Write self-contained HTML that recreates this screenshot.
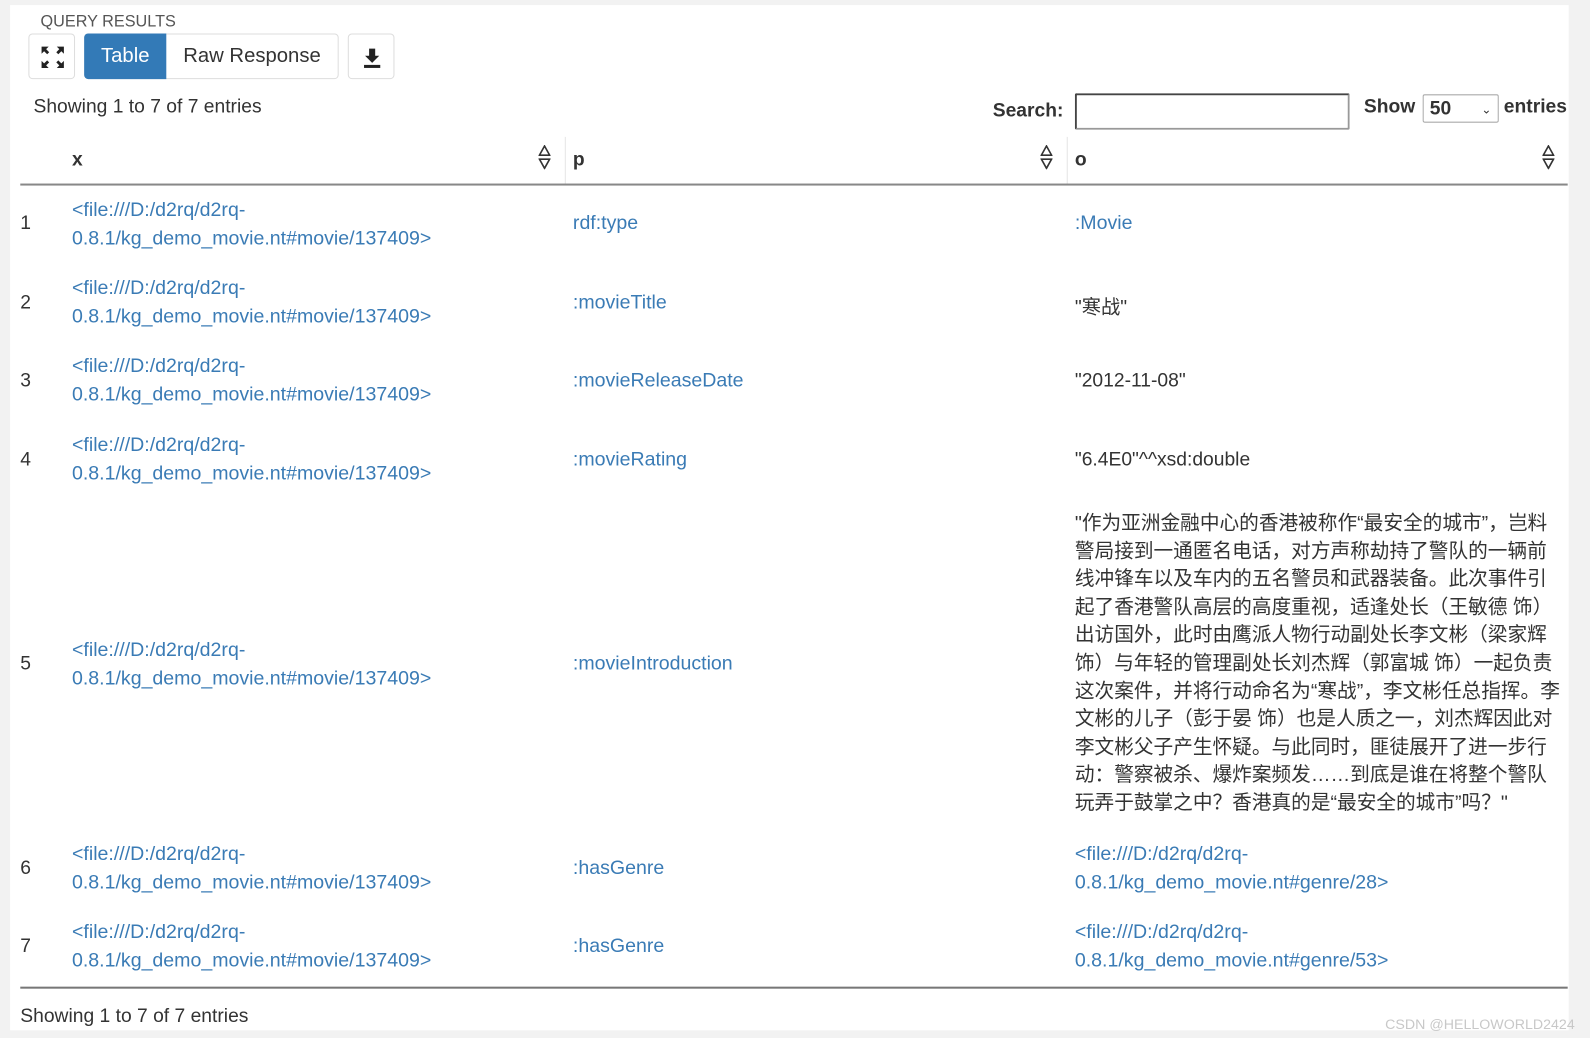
<!DOCTYPE html>
<html><head><meta charset="utf-8">
<style>
*{margin:0;padding:0;box-sizing:border-box}
html,body{width:1590px;height:1038px;overflow:hidden}
body{background:#f2f2f2;font-family:"Liberation Sans","Noto Sans CJK SC",sans-serif;color:#333;font-size:19px}
#w{position:absolute;left:0;top:0;width:1568px;height:1024px;transform:scale(1.01403);transform-origin:0 0}
#panel{position:absolute;left:10px;top:5px;width:1537px;height:1011px;background:#fff}
.a{position:absolute;white-space:nowrap}
.lk{color:#3a7bb5;font-size:19.3px}
.t2{line-height:27.5px}
.btn{position:absolute;border:1px solid #ddd;border-radius:4px;background:#fff}
.sort{position:absolute;width:12px;height:24px}
.vl{position:absolute;top:135px;height:47px;width:1px;background:#e5e5e5}
</style></head><body><div id="w">
<div id="panel"></div>
<div class="a" style="left:40px;top:13px;font-size:16px;color:#555">QUERY RESULTS</div>
<div class="btn" style="left:28px;top:33px;width:46px;height:45px">
<svg width="46" height="45" viewBox="0 0 46 45"><g fill="#222">
<path d="M12 12h7l-2.5 2.5 3 3-2 2-3-3L12 19z"/><path d="M34 12h-7l2.5 2.5-3 3 2 2 3-3L34 19z"/>
<path d="M12 33h7l-2.5-2.5 3-3-2-2-3 3L12 26z"/><path d="M34 33h-7l2.5-2.5-3-3 2-2 3 3L34 26z"/></g></svg></div>
<div class="btn" style="left:83px;top:33px;width:251px;height:45px"></div>
<div class="a" style="left:83px;top:33px;width:81px;height:45px;background:#337ab7;border-radius:4px 0 0 4px;color:#fff;line-height:45px;text-align:center;font-size:20px">Table</div>
<div class="a" style="left:164px;top:33px;width:169px;height:45px;line-height:45px;text-align:center;font-size:20px;color:#333">Raw Response</div>
<div class="btn" style="left:343px;top:33px;width:46px;height:45px">
<svg width="46" height="45" viewBox="0 0 46 45"><g fill="#222"><path d="M20 14h6v7h4l-7 7-7-7h4z"/><rect x="15" y="30" width="16" height="3"/></g></svg></div>
<div class="a" style="left:33px;top:95px">Showing 1 to 7 of 7 entries</div>
<div class="a" style="left:979px;top:99px;font-weight:bold;color:#333">Search:</div>
<div class="a" style="left:1060px;top:92px;width:271px;height:36px;border:2px solid #333;border-radius:2px;border-color:#444 #999 #999 #444"></div>
<div class="a" style="left:1345px;top:95px;font-weight:bold">Show</div>
<div class="a" style="left:1403px;top:93px;width:75px;height:28px;border:1px solid #aaa;border-radius:2px;font-weight:bold;padding-left:6px;line-height:28px">50<span style="position:absolute;right:6px;top:0;font-size:12px;font-weight:normal">&#8964;</span></div>
<div class="a" style="left:1483px;top:95px;font-weight:bold">entries</div>

<div class="a" style="left:71px;top:147px;font-weight:bold">x</div>
<div class="a" style="left:565px;top:147px;font-weight:bold">p</div>
<div class="a" style="left:1060px;top:147px;font-weight:bold">o</div>
<div class="vl" style="left:557px"></div><div class="vl" style="left:1052px"></div>
<svg class="sort" style="left:531px;top:143px" viewBox="0 0 12 24"><path d="M6 1L11 10H1z" fill="none" stroke="#333" stroke-width="1.6"/><path d="M6 23L11 14H1z" fill="none" stroke="#333" stroke-width="1.6"/></svg>
<svg class="sort" style="left:1026px;top:143px" viewBox="0 0 12 24"><path d="M6 1L11 10H1z" fill="none" stroke="#333" stroke-width="1.6"/><path d="M6 23L11 14H1z" fill="none" stroke="#333" stroke-width="1.6"/></svg>
<svg class="sort" style="left:1521px;top:143px" viewBox="0 0 12 24"><path d="M6 1L11 10H1z" fill="none" stroke="#333" stroke-width="1.6"/><path d="M6 23L11 14H1z" fill="none" stroke="#333" stroke-width="1.6"/></svg>
<div class="a" style="left:20px;top:181px;width:1526px;height:2px;background:#888"></div>

<div class="a" style="left:20px;top:210px">1</div>
<div class="a lk t2" style="left:71px;top:194px">&lt;file:///D:/d2rq/d2rq-<br>0.8.1/kg_demo_movie.nt#movie/137409&gt;</div>
<div class="a lk" style="left:565px;top:210px">rdf:type</div>
<div class="a lk" style="left:1060px;top:210px">:Movie</div>

<div class="a" style="left:20px;top:288px">2</div>
<div class="a lk t2" style="left:71px;top:271px">&lt;file:///D:/d2rq/d2rq-<br>0.8.1/kg_demo_movie.nt#movie/137409&gt;</div>
<div class="a lk" style="left:565px;top:288px">:movieTitle</div>
<div class="a" style="left:1060px;top:288px">"寒战"</div>

<div class="a" style="left:20px;top:365px">3</div>
<div class="a lk t2" style="left:71px;top:348px">&lt;file:///D:/d2rq/d2rq-<br>0.8.1/kg_demo_movie.nt#movie/137409&gt;</div>
<div class="a lk" style="left:565px;top:365px">:movieReleaseDate</div>
<div class="a" style="left:1060px;top:365px">"2012-11-08"</div>

<div class="a" style="left:20px;top:443px">4</div>
<div class="a lk t2" style="left:71px;top:426px">&lt;file:///D:/d2rq/d2rq-<br>0.8.1/kg_demo_movie.nt#movie/137409&gt;</div>
<div class="a lk" style="left:565px;top:443px">:movieRating</div>
<div class="a" style="left:1060px;top:443px">"6.4E0"^^xsd:double</div>

<div class="a" style="left:20px;top:644px">5</div>
<div class="a lk t2" style="left:71px;top:628px">&lt;file:///D:/d2rq/d2rq-<br>0.8.1/kg_demo_movie.nt#movie/137409&gt;</div>
<div class="a lk" style="left:565px;top:644px">:movieIntroduction</div>
<div class="a" style="left:1060px;top:503px;font-size:19.4px;line-height:27.6px">"作为亚洲金融中心的香港被称作“最安全的城市”，岂料<br>警局接到一通匿名电话，对方声称劫持了警队的一辆前<br>线冲锋车以及车内的五名警员和武器装备。此次事件引<br>起了香港警队高层的高度重视，适逢处长（王敏德 饰）<br>出访国外，此时由鹰派人物行动副处长李文彬（梁家辉<br>饰）与年轻的管理副处长刘杰辉（郭富城 饰）一起负责<br>这次案件，并将行动命名为“寒战”，李文彬任总指挥。李<br>文彬的儿子（彭于晏 饰）也是人质之一，刘杰辉因此对<br>李文彬父子产生怀疑。与此同时，匪徒展开了进一步行<br>动：警察被杀、爆炸案频发……到底是谁在将整个警队<br>玩弄于鼓掌之中？香港真的是“最安全的城市”吗？"</div>

<div class="a" style="left:20px;top:846px">6</div>
<div class="a lk t2" style="left:71px;top:829px">&lt;file:///D:/d2rq/d2rq-<br>0.8.1/kg_demo_movie.nt#movie/137409&gt;</div>
<div class="a lk" style="left:565px;top:846px">:hasGenre</div>
<div class="a lk t2" style="left:1060px;top:829px">&lt;file:///D:/d2rq/d2rq-<br>0.8.1/kg_demo_movie.nt#genre/28&gt;</div>

<div class="a" style="left:20px;top:923px">7</div>
<div class="a lk t2" style="left:71px;top:906px">&lt;file:///D:/d2rq/d2rq-<br>0.8.1/kg_demo_movie.nt#movie/137409&gt;</div>
<div class="a lk" style="left:565px;top:923px">:hasGenre</div>
<div class="a lk t2" style="left:1060px;top:906px">&lt;file:///D:/d2rq/d2rq-<br>0.8.1/kg_demo_movie.nt#genre/53&gt;</div>

<div class="a" style="left:20px;top:973px;width:1526px;height:2px;background:#777"></div>
<div class="a" style="left:20px;top:992px">Showing 1 to 7 of 7 entries</div>
<div class="a" style="left:1366px;top:1002px;font-size:14px;color:#c8c8c8">CSDN @HELLOWORLD2424</div>
</div></body></html>
